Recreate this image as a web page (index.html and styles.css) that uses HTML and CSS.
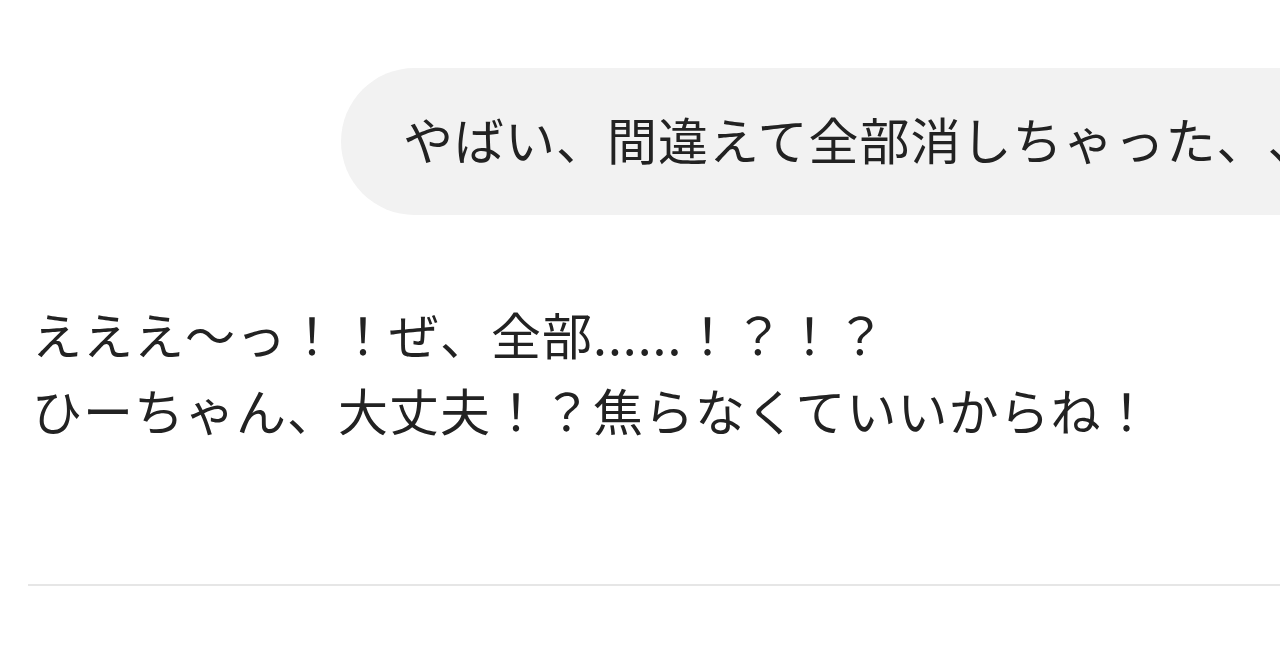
FILE: index.html
```html
<!DOCTYPE html>
<html lang="ja">
<head>
<meta charset="utf-8">
<link rel="stylesheet" href="styles.css">
</head>
<body>
<div class="page">
  <div class="row-out">
    <div class="bubble">やばい、間違えて全部消しちゃった、、</div>
  </div>
  <div class="reply">
    <p class="line">えええ〜っ！！ぜ、全部......！？！？</p>
    <p class="line">ひーちゃん、大丈夫！？焦らなくていいからね！</p>
  </div>
  <div class="divider"></div>
</div>
</body>
</html>
```
FILE: styles.css
```css
html, body {
  margin: 0;
  padding: 0;
  background: #ffffff;
}
body {
  width: 1280px;
  height: 670px;
  overflow: hidden;
  font-family: "Noto Sans CJK JP", "Noto Sans", sans-serif;
  color: #222222;
  text-spacing-trim: space-all;
}
.page {
  padding-top: 68px;
}
.row-out {
  display: flex;
  padding-left: 341px;
  white-space: nowrap;
}
.bubble {
  flex: none;
  display: flex;
  align-items: center;
  box-sizing: border-box;
  height: 147px;
  padding: 0 62px 8px;
  background: #f2f2f2;
  border-radius: 74px;
  font-size: 50px;
  letter-spacing: 1px;
}
.reply {
  margin-top: 80px;
  padding-left: 32px;
  font-size: 50px;
  letter-spacing: 1px;
  line-height: 76px;
  white-space: nowrap;
}
.line {
  margin: 0;
}
.divider {
  margin-top: 137px;
  margin-left: 28px;
  height: 2px;
  background: #e6e6e6;
}
```
